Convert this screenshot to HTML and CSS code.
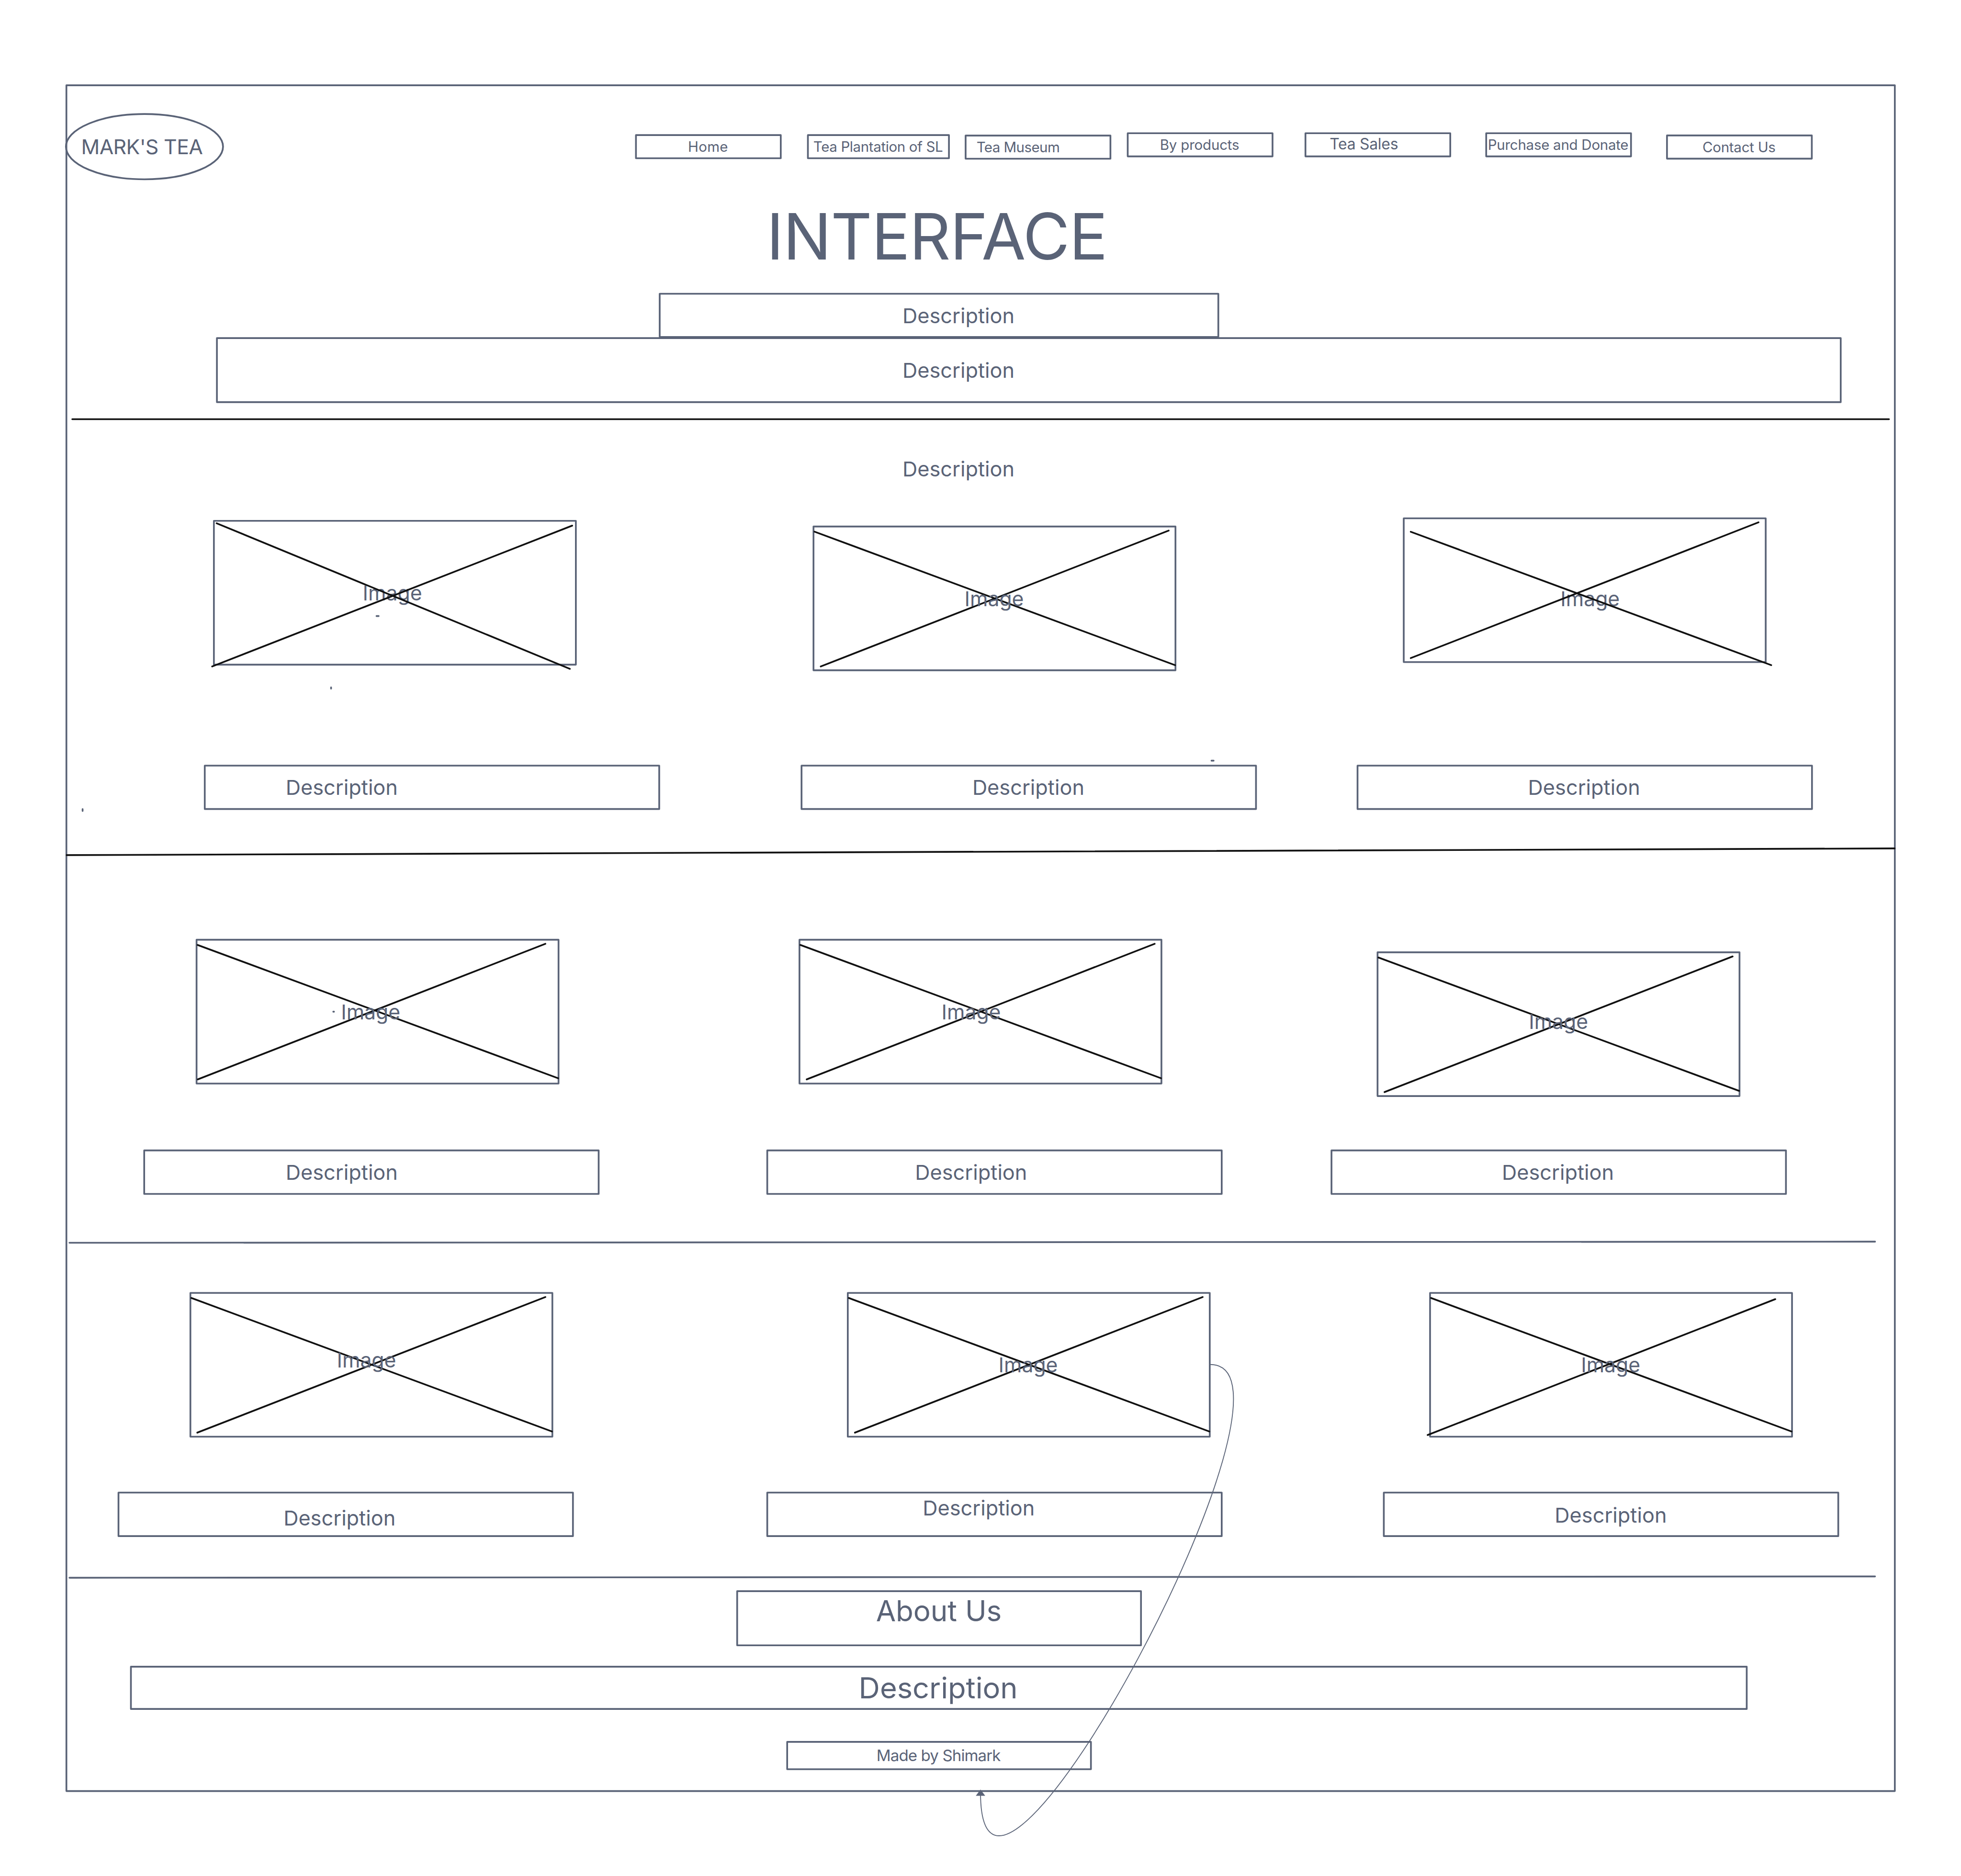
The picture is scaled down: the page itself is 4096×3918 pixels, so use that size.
FILE: index.html
```
<!DOCTYPE html>
<html lang="en">
<head>
  <meta charset="utf-8">
  <title>Mark's Tea – Interface wireframe</title>
  <link rel="stylesheet" href="styles.css">
</head>
<body>
  <svg class="board" viewBox="0 0 4164 3983" role="img" aria-label="Mark's Tea wireframe">
    <!-- Page frame -->
    <rect class="shape" x="141" y="181" width="3882.5" height="3621.7"/>

    <!-- Logo -->
    <g>
      <ellipse class="shape" cx="306.8" cy="311.4" rx="166.8" ry="69.3"/>
      <text class="label" x="172.4" y="327.5" textLength="258.5">MARK'S TEA</text>
    </g>

    <!-- Navigation -->
    <g>
      <rect class="shape" x="1350.4" y="286.8" width="307.5" height="49.2"/>
      <text class="label nav" x="1460.9" y="322" textLength="84.8">Home</text>
      <rect class="shape" x="1715.5" y="286.8" width="299.5" height="49.2"/>
      <text class="label nav" x="1727" y="322" textLength="275.5">Tea Plantation of SL</text>
      <rect class="shape" x="2050.4" y="287.8" width="307.5" height="49.2"/>
      <text class="label nav" x="2073.5" y="323" textLength="177">Tea Museum</text>
      <rect class="shape" x="2394.6" y="282.8" width="307.5" height="49.2"/>
      <text class="label nav" x="2463" y="318.3" textLength="168.5">By products</text>
      <rect class="shape" x="2772" y="282.8" width="307.5" height="49.2"/>
      <text class="label sales" x="2823.3" y="317.2" textLength="145.7">Tea Sales</text>
      <rect class="shape" x="3155.8" y="282.8" width="307.5" height="49.2"/>
      <text class="label nav" x="3159.4" y="318.6" textLength="298.6">Purchase and Donate</text>
      <rect class="shape" x="3539.7" y="287.6" width="307.5" height="49.2"/>
      <text class="label nav" x="3615" y="323.3" textLength="155.5">Contact Us</text>
    </g>

    <!-- Hero -->
    <g>
      <text class="label title" x="1627.5" y="551" textLength="724.5">INTERFACE</text>
      <rect class="shape" x="1400.8" y="623.7" width="1186.2" height="91.8"/>
      <text class="label" x="1916.3" y="685.7" textLength="238" lengthAdjust="spacingAndGlyphs">Description</text>
      <rect class="shape" x="460.6" y="717.8" width="3448" height="136"/>
      <text class="label" x="1916.3" y="801.8" textLength="238" lengthAdjust="spacingAndGlyphs">Description</text>
      <line class="ink" x1="153.5" y1="890" x2="4011" y2="890"/>
      <text class="label" x="1916.3" y="1011.3" textLength="238" lengthAdjust="spacingAndGlyphs">Description</text>
    </g>

    <!-- First row of cards -->
    <g>
      <rect class="shape" x="454.2" y="1105.8" width="768.6" height="305.3"/>
      <text class="label" x="770.2" y="1275.2" textLength="126" lengthAdjust="spacingAndGlyphs">Image</text>
      <path class="ink" d="M460 1111L1210 1420M1215 1116L450.5 1415"/>

      <rect class="shape" x="1727.4" y="1117.8" width="768.6" height="305.3"/>
      <path class="ink" d="M1729.5 1128.8L2495 1412.2M2481.5 1126.5L1742.8 1415"/>
      <text class="label" x="2048" y="1286.8" textLength="126" lengthAdjust="spacingAndGlyphs">Image</text>

      <rect class="shape" x="2980.7" y="1100.4" width="768.6" height="305.3"/>
      <text class="label" x="3313.4" y="1286.9" textLength="126" lengthAdjust="spacingAndGlyphs">Image</text>
      <path class="ink" d="M2995.6 1129L3761 1412.2M3734 1109L2995.6 1397.2"/>

      <rect class="shape" x="434.8" y="1625.5" width="965" height="92.2"/>
      <text class="label" x="606.7" y="1688" textLength="238" lengthAdjust="spacingAndGlyphs">Description</text>
      <rect class="shape" x="1702" y="1625.5" width="965" height="92.2"/>
      <text class="label" x="2064.6" y="1688" textLength="238" lengthAdjust="spacingAndGlyphs">Description</text>
      <rect class="shape" x="2882.6" y="1625.5" width="965" height="92.2"/>
      <text class="label" x="3244.6" y="1688" textLength="238" lengthAdjust="spacingAndGlyphs">Description</text>
      <line class="ink" x1="141.5" y1="1815.5" x2="4023" y2="1801.3"/>
    </g>

    <!-- Second row of cards -->
    <g>
      <rect class="shape" x="417.4" y="1995.2" width="768.6" height="305.3"/>
      <path class="ink" d="M419.5 2006.3L1185 2289.2M1158 2003.8L420 2291.7"/>
      <text class="label" x="724" y="2164.5" textLength="126" lengthAdjust="spacingAndGlyphs">Image</text>

      <rect class="shape" x="1697.6" y="1995.2" width="768.6" height="305.3"/>
      <path class="ink" d="M1699.5 2006.3L2465.3 2289.2M2451.8 2003.8L1713 2291.7"/>
      <text class="label" x="1999.2" y="2164.5" textLength="126" lengthAdjust="spacingAndGlyphs">Image</text>

      <rect class="shape" x="2925.1" y="2021.8" width="768.6" height="305.3"/>
      <path class="ink" d="M2927 2033L3692.7 2316M3679 2030.7L2940 2318.6"/>
      <text class="label" x="3246.2" y="2184.8" textLength="126" lengthAdjust="spacingAndGlyphs">Image</text>

      <rect class="shape" x="306.2" y="2442.5" width="965" height="92.4"/>
      <text class="label" x="606.7" y="2504.9" textLength="238" lengthAdjust="spacingAndGlyphs">Description</text>
      <rect class="shape" x="1629.2" y="2442.5" width="965" height="92.4"/>
      <text class="label" x="1943" y="2504.9" textLength="238" lengthAdjust="spacingAndGlyphs">Description</text>
      <rect class="shape" x="2827.3" y="2442.5" width="965" height="92.4"/>
      <text class="label" x="3189" y="2504.9" textLength="238" lengthAdjust="spacingAndGlyphs">Description</text>
      <line class="shape" x1="147.5" y1="2638.6" x2="3981.5" y2="2636.2"/>
    </g>

    <!-- Third row of cards -->
    <g>
      <rect class="shape" x="404.3" y="2745" width="768.6" height="305.3"/>
      <path class="ink" d="M406.3 2755.8L1172 3039.2M1158 2753.8L419 3041.7"/>
      <text class="label" x="715.2" y="2903.7" textLength="126" lengthAdjust="spacingAndGlyphs">Image</text>

      <rect class="shape" x="1800.2" y="2745" width="768.6" height="305.3"/>
      <path class="ink" d="M1802.3 2755.8L2567.8 3039.2M2553.7 2753.8L1815.4 3041.7"/>
      <text class="label" x="2120.2" y="2913.9" textLength="126" lengthAdjust="spacingAndGlyphs">Image</text>

      <rect class="shape" x="3036.6" y="2745" width="768.6" height="305.3"/>
      <path class="ink" d="M3038.5 2755.8L3804 3039.2M3769.6 2758.3L3031.5 3046.7"/>
      <text class="label" x="3357" y="2913.9" textLength="126" lengthAdjust="spacingAndGlyphs">Image</text>

      <rect class="shape" x="251.6" y="3169" width="965" height="92.4"/>
      <text class="label" x="602" y="3238.7" textLength="238" lengthAdjust="spacingAndGlyphs">Description</text>
      <rect class="shape" x="1629.2" y="3169" width="965" height="92.4"/>
      <text class="label" x="1959.2" y="3217.8" textLength="238" lengthAdjust="spacingAndGlyphs">Description</text>
      <rect class="shape" x="2938.4" y="3169" width="965" height="92.4"/>
      <text class="label" x="3301.3" y="3232.8" textLength="238" lengthAdjust="spacingAndGlyphs">Description</text>
      <line class="shape" x1="147.5" y1="3349.8" x2="3981.5" y2="3347"/>
    </g>

    <!-- Footer -->
    <g>
      <rect class="shape" x="1565.3" y="3378.3" width="857.5" height="115"/>
      <text class="label heading" x="1860" y="3442" textLength="267" lengthAdjust="spacingAndGlyphs">About Us</text>
      <rect class="shape" x="278" y="3538.6" width="3431" height="89.8"/>
      <text class="label heading" x="1823.4" y="3605.4" textLength="337.5" lengthAdjust="spacingAndGlyphs">Description</text>
      <rect class="shape" x="1671.5" y="3698.3" width="645" height="58"/>
      <text class="label credit" x="1861.2" y="3739" textLength="264">Made by Shimark</text>
    </g>

    <!-- Stray pen marks -->
    <path class="shape" d="M799.5 1308h4.5M703 1459.5v2.5M175.4 1717.8v4M2572.5 1615h4.5M707.7 2148h1.5"/>

    <!-- Connector from the middle card to the bottom of the frame -->
    <path class="connector" d="M2570 2897C2812 2897 2082 4257 2082 3806"/>
    <path class="arrowhead" d="M2082 3799.5L2092 3812.8H2072Z"/>
  </svg>
</body>
</html>
```
FILE: styles.css
```
body {
  margin: 0;
  background: #fff;
}

.board {
  display: block;
  width: 100vw;
  height: 100vh;
}

.shape,
.ink {
  fill: none;
  stroke: #5a6377;
  stroke-width: 3.7;
  stroke-linecap: round;
  stroke-linejoin: round;
}

.ink {
  stroke: #111;
}

.label {
  fill: #5a6377;
  font-family: Inter, "Liberation Sans", sans-serif;
  font-size: 43.6px;
}

.nav {
  font-size: 30px;
}

.sales {
  font-size: 32.5px;
}

.title {
  font-size: 136px;
}

.heading {
  font-size: 62px;
}

.credit {
  font-size: 33.6px;
}

.connector {
  fill: none;
  stroke: #5a6377;
  stroke-width: 1.9;
}

.arrowhead {
  fill: #5a6377;
}
```
